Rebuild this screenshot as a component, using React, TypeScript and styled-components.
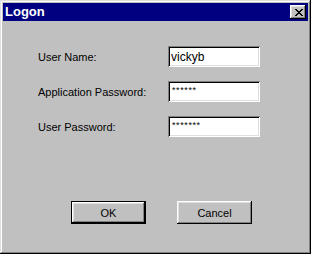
import React, { FC } from 'react';
import styled, { createGlobalStyle } from 'styled-components';

const GlobalStyle = createGlobalStyle`
  html, body {
    margin: 0;
    padding: 0;
    background: #c0c0c0;
  }
  body {
    font-family: 'Liberation Sans', Arial, sans-serif;
  }
`;

const Window = styled.div`
  box-sizing: border-box;
  width: 311px;
  height: 254px;
  padding: 3px;
  display: flex;
  flex-direction: column;
  background: #c0c0c0;
  box-shadow:
    inset -1px -1px #000000,
    inset 1px 1px #dfdfdf,
    inset -2px -2px #808080,
    inset 2px 2px #ffffff;
`;

const TitleBar = styled.div`
  height: 18px;
  display: flex;
  align-items: center;
  justify-content: space-between;
  padding: 0 2px;
  background: #000080;
`;

const Title = styled.span`
  color: #ffffff;
  font-weight: bold;
  font-size: 13px;
  line-height: 18px;
`;

const CloseButton = styled.button`
  box-sizing: border-box;
  width: 16px;
  height: 14px;
  padding: 0 0 0 1px;
  border: none;
  display: flex;
  align-items: center;
  justify-content: center;
  background: #c0c0c0;
  box-shadow:
    inset -1px -1px #000000,
    inset 1px 1px #ffffff,
    inset -2px -2px #808080,
    inset 2px 2px #dfdfdf;
`;

const Body = styled.div`
  flex: 1;
  display: flex;
  flex-direction: column;
  padding: 25px 0 27px 35px;
`;

const Form = styled.div`
  display: grid;
  grid-template-columns: 130px 92px;
  grid-auto-rows: 21px;
  row-gap: 14px;
  align-items: center;
`;

const Label = styled.label`
  font-size: 11px;
  color: #000000;
`;

const Field = styled.div<{ $masked?: boolean }>`
  box-sizing: border-box;
  height: 21px;
  padding: ${(p) => (p.$masked ? '0 0 3px 4px' : '0 3px')};
  display: flex;
  align-items: center;
  background: #ffffff;
  color: #000000;
  font-size: ${(p) => (p.$masked ? '9px' : '12px')};
  letter-spacing: ${(p) => (p.$masked ? '0.6px' : '0')};
  box-shadow:
    inset 1px 1px #808080,
    inset -1px -1px #ffffff,
    inset 2px 2px #000000,
    inset -2px -2px #dfdfdf;
`;

const Buttons = styled.div`
  margin-top: auto;
  display: flex;
  gap: 31px;
  padding-left: 33px;
`;

const Button = styled.button<{ $default?: boolean }>`
  box-sizing: border-box;
  width: 75px;
  height: 23px;
  padding: 0;
  border: ${(p) => (p.$default ? '1px solid #000000' : 'none')};
  background: #c0c0c0;
  font-family: 'Liberation Sans', Arial, sans-serif;
  font-size: 11px;
  color: #000000;
  box-shadow:
    inset -1px -1px #000000,
    inset 1px 1px #ffffff,
    inset -2px -2px #808080,
    inset 2px 2px #dfdfdf;
`;

const CloseGlyph: FC = () => (
  <svg width="8" height="7" viewBox="0 0 8 7" shapeRendering="crispEdges">
    <path
      fill="#000"
      d="M0 0h2v1h-2zM6 0h2v1h-2zM1 1h2v1h-2zM5 1h2v1h-2zM2 2h4v1h-4zM3 3h2v1h-2zM2 4h4v1h-4zM1 5h2v1h-2zM5 5h2v1h-2zM0 6h2v1h-2zM6 6h2v1h-2z"
    />
  </svg>
);

const fields = [
  { label: 'User Name:', value: 'vickyb', masked: false },
  { label: 'Application Password:', value: '******', masked: true },
  { label: 'User Password:', value: '*******', masked: true },
];

const App: FC = () => (
  <>
    <GlobalStyle />
    <Window>
      <TitleBar>
        <Title>Logon</Title>
        <CloseButton aria-label="Close">
          <CloseGlyph />
        </CloseButton>
      </TitleBar>
      <Body>
        <Form>
          {fields.map((f) => (
            <React.Fragment key={f.label}>
              <Label>{f.label}</Label>
              <Field $masked={f.masked}>{f.value}</Field>
            </React.Fragment>
          ))}
        </Form>
        <Buttons>
          <Button $default>OK</Button>
          <Button>Cancel</Button>
        </Buttons>
      </Body>
    </Window>
  </>
);

export default App;
